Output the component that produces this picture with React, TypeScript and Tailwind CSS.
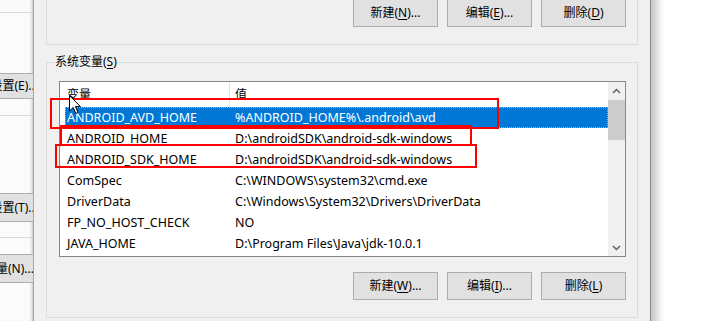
const Btn = ({ label, keyChar, tail, cut }: { label: string; keyChar: string; tail: string; cut?: boolean }) => (
  <button
    className={
      "w-[85px] flex items-center justify-center bg-[#e1e1e1] border border-[#adadad] text-[12px] text-black " +
      (cut ? "h-[27px] border-t-0" : "h-[28px]")
    }
  >
    {label}(<span className="underline underline-offset-2">{keyChar}</span>){tail}
  </button>
)

const rows = [
  ["ANDROID_AVD_HOME", "%ANDROID_HOME%\\.android\\avd"],
  ["ANDROID_HOME", "D:\\androidSDK\\android-sdk-windows"],
  ["ANDROID_SDK_HOME", "D:\\androidSDK\\android-sdk-windows"],
  ["ComSpec", "C:\\WINDOWS\\system32\\cmd.exe"],
  ["DriverData", "C:\\Windows\\System32\\Drivers\\DriverData"],
  ["FP_NO_HOST_CHECK", "NO"],
  ["JAVA_HOME", "D:\\Program Files\\Java\\jdk-10.0.1"],
]

const LeftBtn = ({ text, h }: { text: string; h: string }) => (
  <div className={"flex items-center justify-end overflow-hidden whitespace-nowrap bg-[#e1e1e1] border-y border-[#adadad] " + h}>
    <span className="mr-[-5px]">{text}</span>
  </div>
)

export default function App() {
  return (
    <div className="relative w-[716px] h-[321px] overflow-hidden flex bg-white text-[12px] text-black font-['Noto_Sans','Noto_Sans_CJK_SC',sans-serif]">
      {/* background window */}
      <div className="w-[33px] shrink-0 flex flex-col bg-[#fbfbfb] shadow-[inset_-3px_0_3px_-2px_rgba(0,0,0,0.25)]">
        <div className="h-[12px]" />
        <div className="h-px bg-[#dadada]" />
        <div className="h-[60px]" />
        <LeftBtn text="设置(E)..." h="h-[26px]" />
        <div className="h-[16px]" />
        <div className="h-px bg-[#dadada]" />
        <div className="h-[77px]" />
        <LeftBtn text="设置(T)..." h="h-[29px]" />
        <div className="h-[15px]" />
        <div className="h-px bg-[#dadada]" />
        <div className="h-[16px]" />
        <div className="flex items-center overflow-hidden whitespace-nowrap bg-[#e1e1e1] border-y border-[#adadad] h-[29px]">
          <span className="ml-[-4px]">量(N)...</span>
        </div>
      </div>

      {/* dialog */}
      <div className="w-[618px] shrink-0 bg-[#f0f0f0] border-l border-[#a8a8a8] border-r border-r-[#8c8c8c] px-[12px]">
        <div className="h-[45px] border-x border-b border-[#dcdcdc] flex justify-end gap-[9px] pr-[11px]">
          <Btn label="新建" keyChar="N" tail="..." cut />
          <Btn label="编辑" keyChar="E" tail="..." cut />
          <Btn label="删除" keyChar="D" tail="" cut />
        </div>

        <fieldset className="mt-[9px] h-[264px] border border-[#dcdcdc] flex flex-col">
          <legend className="ml-[8px] leading-[16px]">
            系统变量(<span className="underline underline-offset-2">S</span>)
          </legend>

          <div className="mt-[11px] ml-[12px] w-[567px] h-[176px] border border-[#828790] bg-white flex">
            <div className="flex-1 flex flex-col text-[12.5px]">
              <div className="h-[25px] flex items-center text-[12px]">
                <div className="w-[169px] pl-[7px]">变量</div>
                <div className="w-px h-full bg-[#e5e5e5]" />
                <div className="pl-[5px]">值</div>
              </div>
              {rows.map(([k, v], i) => (
                <div
                  key={k}
                  className={
                    "ml-[5px] h-[21px] pt-[2px] grid grid-cols-[170px_1fr] items-center whitespace-nowrap " +
                    (i === 0 ? "bg-[#0078d7] text-white outline-1 outline-dotted outline-[#ff9a3c] -outline-offset-1" : "")
                  }
                >
                  <div className="pl-[2px]">{k}</div>
                  <div>{v}</div>
                </div>
              ))}
            </div>
            {/* scrollbar */}
            <div className="w-[17px] bg-[#f0f0f0] flex flex-col">
              <div className="h-[18px] flex items-center justify-center">
                <svg width="9" height="6" viewBox="0 0 9 6">
                  <path d="M1 5 L4.5 1.5 L8 5" fill="none" stroke="#606060" strokeWidth="1.5" />
                </svg>
              </div>
              <div className="h-[40px] bg-[#cdcdcd]" />
              <div className="flex-1" />
              <div className="h-[17px] flex items-center justify-center">
                <svg width="9" height="6" viewBox="0 0 9 6">
                  <path d="M1 1 L4.5 4.5 L8 1" fill="none" stroke="#606060" strokeWidth="1.5" />
                </svg>
              </div>
            </div>
          </div>

          <div className="mt-[15px] flex justify-end gap-[9px] pr-[11px]">
            <Btn label="新建" keyChar="W" tail="..." />
            <Btn label="编辑" keyChar="I" tail="..." />
            <Btn label="删除" keyChar="L" tail="" />
          </div>
        </fieldset>
      </div>

      {/* desktop behind, with the dialog shadow */}
      <div className="flex-1 bg-gradient-to-r from-[#c4c4c4] via-[#f4f4f4] via-[10px] to-white to-[14px]" />

      {/* red annotation boxes */}
      <div className="absolute left-[50px] top-[98px] w-[449px] h-[31px] border-2 border-[#ff0000]" />
      <div className="absolute left-[60px] top-[125px] w-[412px] h-[21px] border-2 border-[#ff0000]" />
      <div className="absolute left-[55px] top-[144px] w-[422px] h-[24px] border-2 border-[#ff0000]" />

      {/* mouse pointer */}
      <svg className="absolute left-[69px] top-[95px]" width="13" height="20" viewBox="0 0 13 20">
        <path d="M0.5 0.5 L0.5 16 L4.2 12.4 L6.8 18.5 L9 17.5 L6.5 11.6 L11.5 11.6 Z" fill="white" stroke="black" strokeWidth="1" />
      </svg>
    </div>
  )
}
